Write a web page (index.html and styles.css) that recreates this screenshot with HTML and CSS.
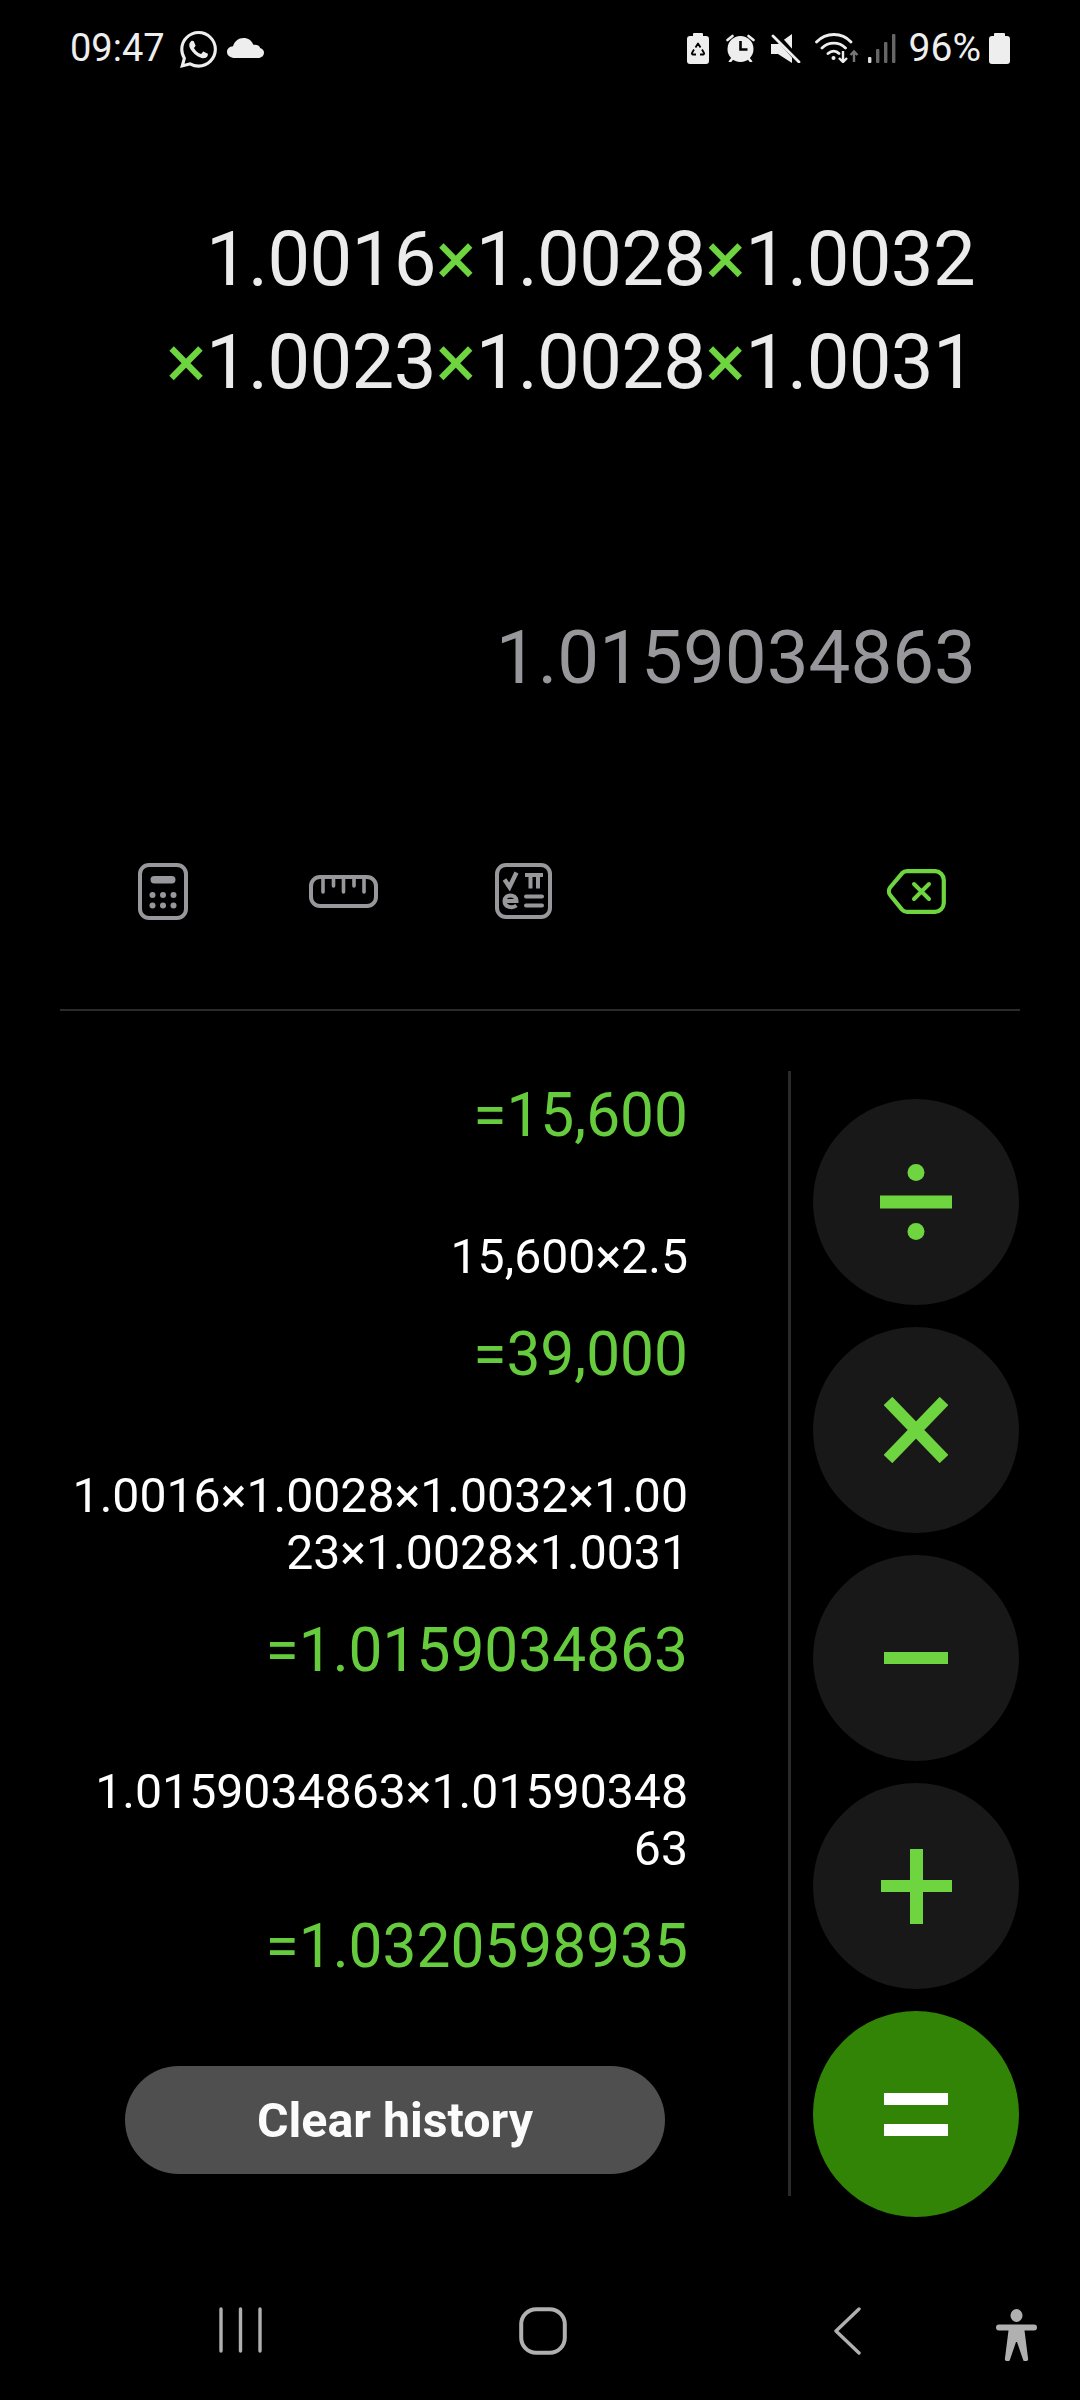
FILE: index.html
```html
<!DOCTYPE html>
<html lang="en">
<head>
    <meta charset="UTF-8">
    <meta name="viewport" content="width=device-width, initial-scale=1.0">
    <title>Calculator</title>
    <link rel="stylesheet" href="styles.css">
</head>
<body>
    <div class="app">
        <div class="statusbar">
            <span class="clock">09:47</span>
            <svg class="st-whatsapp" viewBox="0 0 24 24"><path fill="#eee" d="M17.472 14.382c-.297-.149-1.758-.867-2.03-.967-.273-.099-.471-.148-.67.15-.197.297-.767.966-.94 1.164-.173.199-.347.223-.644.075-.297-.15-1.255-.463-2.39-1.475-.883-.788-1.48-1.761-1.653-2.059-.173-.297-.018-.458.13-.606.134-.133.298-.347.446-.52.149-.174.198-.298.298-.497.099-.198.05-.371-.025-.52-.075-.149-.669-1.612-.916-2.207-.242-.579-.487-.5-.669-.51-.173-.008-.371-.01-.57-.01-.198 0-.52.074-.792.372-.272.297-1.04 1.016-1.04 2.479 0 1.462 1.065 2.875 1.213 3.074.149.198 2.096 3.2 5.077 4.487.709.306 1.262.489 1.694.625.712.227 1.36.195 1.871.118.571-.085 1.758-.719 2.006-1.413.248-.694.248-1.289.173-1.413-.074-.124-.272-.198-.57-.347m-5.421 7.403h-.004a9.87 9.87 0 01-5.031-1.378l-.361-.214-3.741.982.998-3.648-.235-.374a9.86 9.86 0 01-1.51-5.26c.001-5.45 4.436-9.884 9.888-9.884 2.64 0 5.122 1.03 6.988 2.898a9.825 9.825 0 012.893 6.994c-.003 5.45-4.437 9.884-9.885 9.884m8.413-18.297A11.815 11.815 0 0012.05 0C5.495 0 .16 5.335.157 11.892c0 2.096.547 4.142 1.588 5.945L.057 24l6.305-1.654a11.882 11.882 0 005.683 1.448h.005c6.554 0 11.89-5.335 11.893-11.893a11.821 11.821 0 00-3.48-8.413z"/></svg>
            <svg class="st-cloud" viewBox="0 0 37 20"><path fill="#eee" d="M8 20C3.600 20 0 17.500 0 14c0-3.300 2.600-5.600 6-5.800C7.500 3.300 11.500 0 16.500 0c4.700 0 8.400 2.700 9.800 6.800 .5-.1 1-.1 1.500-.1 2.700 0 4.700 1.200 5.400 3.200 2.200.6 3.800 2.300 3.800 4.600 0 3.200-2.600 5.500-5.800 5.500z"/></svg>
            <div class="status-right">
                <svg class="st-recycle" viewBox="0 0 22 31">
                    <path fill="#eee" d="M7 0h8a1 1 0 0 1 1 1v2h3a3 3 0 0 1 3 3v22a3 3 0 0 1-3 3H3a3 3 0 0 1-3-3V6a3 3 0 0 1 3-3h3V1a1 1 0 0 1 1-1z"/>
                    <path fill="none" stroke="#000" stroke-width="1.8" stroke-linejoin="round" d="M8.500 14.500L11 10.500l2.500 4M15 16.500l2 3.500a1 1 0 0 1-1 1.500h-3M9 21.500H6a1 1 0 0 1-1-1.500l2-3.500"/>
                </svg>
                <svg class="st-alarm" viewBox="0 0 29 28">
                    <circle cx="14.500" cy="15" r="13" fill="#eee"/>
                    <path stroke="#000" stroke-width="2" d="M0 7L7 0M29 7L22 0"/>
                    <path fill="none" stroke="#eee" stroke-width="2.600" stroke-linecap="round" d="M1.500 6L6.500 2M27.500 6L22.500 2M6 25l-2 2.500M23 25l2 2.500"/>
                    <path fill="none" stroke="#000" stroke-width="2.600" d="M14.500 7v8.500h7"/>
                </svg>
                <svg class="st-mute" viewBox="0 0 30 29">
                    <path fill="#eee" d="M0 10h7L21 0v29L7 20H0z"/>
                    <path stroke="#000" stroke-width="6" d="M2 -2l27 30"/>
                    <path stroke="#eee" stroke-width="2.800" stroke-linecap="round" d="M2 2l26 26"/>
                </svg>
                <svg class="st-wifi" viewBox="0 0 44 30">
                    <path fill="none" stroke="#eee" stroke-width="2.800" stroke-linecap="round" d="M1.500 9C11 -1 27 -1 36 9M7 15c6.500-6.500 17-6.500 23.500 0M13 20.500c3.500-3 8-3 11 0"/>
                    <circle cx="18.500" cy="25" r="2" fill="#eee"/>
                    <path fill="none" stroke="#eee" stroke-width="2.400" d="M28 18v11M24 25l4 4 4-4"/>
                    <path fill="none" stroke="#777" stroke-width="2.400" d="M39 29V19M35.500 22l3.500-3.500 3.500 3.500"/>
                </svg>
                <svg class="st-signal" viewBox="0 0 28 29">
                    <rect x="0" y="23" width="3.400" height="6" rx="1" fill="#ddd"/>
                    <rect x="8" y="15" width="3.400" height="14" rx="1" fill="#666"/>
                    <rect x="16" y="8" width="3.400" height="21" rx="1" fill="#666"/>
                    <rect x="24" y="0" width="3.400" height="29" rx="1" fill="#666"/>
                </svg>
                <span class="battery-pct">96%</span>
                <svg class="st-battery" viewBox="0 0 21 31"><path fill="#eee" d="M6 0h9a1 1 0 0 1 1 1v2h2a3 3 0 0 1 3 3v22a3 3 0 0 1-3 3H3a3 3 0 0 1-3-3V6a3 3 0 0 1 3-3h2V1a1 1 0 0 1 1-1z"/></svg>
            </div>
        </div>

        <div class="display">
            <div class="expr-line">1.0016<span class="op">×</span>1.0028<span class="op">×</span>1.0032</div>
            <div class="expr-line"><span class="op">×</span>1.0023<span class="op">×</span>1.0028<span class="op">×</span>1.0031</div>
            <div class="preview">1.0159034863</div>
        </div>

        <div class="tools">
            <div class="tool">
                <svg width="50" height="57" viewBox="0 0 50 57">
                    <rect x="2" y="2" width="46" height="53" rx="9" fill="none" stroke="#98989c" stroke-width="4"/>
                    <rect x="12.500" y="13" width="25" height="7.500" rx="3.700" fill="#98989c"/>
                    <g fill="#98989c">
                        <circle cx="14.500" cy="32" r="3"/><circle cx="25" cy="32" r="3"/><circle cx="35.500" cy="32" r="3"/>
                        <circle cx="14.500" cy="42.500" r="3"/><circle cx="25" cy="42.500" r="3"/><circle cx="35.500" cy="42.500" r="3"/>
                    </g>
                </svg>
            </div>
            <div class="tool">
                <svg width="69" height="33" viewBox="0 0 69 33">
                    <rect x="2" y="2" width="65" height="29" rx="9" fill="none" stroke="#98989c" stroke-width="4"/>
                    <path fill="none" stroke="#98989c" stroke-width="3.600" stroke-linecap="round" d="M14 3v14M24.500 3v8M34.500 3v14M45 3v8M55 3v14"/>
                </svg>
            </div>
            <div class="tool">
                <svg width="57" height="56" viewBox="0 0 57 56">
                    <rect x="2" y="2" width="53" height="52" rx="9" fill="none" stroke="#98989c" stroke-width="4"/>
                    <path fill="none" stroke="#98989c" stroke-width="4.400" d="M9.500 16.500l5 7.500 7-14.500"/>
                    <path fill="none" stroke="#98989c" stroke-width="4" d="M30 12h18M35.500 12v13.500M43 12v13.500"/>
                    <path fill="none" stroke="#98989c" stroke-width="4" d="M9.500 38h12c0-7.500-12-7.500-12 0 0 6.500 8 7.500 12 4.500"/>
                    <path fill="none" stroke="#98989c" stroke-width="4" stroke-linecap="round" d="M31 33.500h16M31 42.500h16"/>
                </svg>
            </div>
            <div class="tool tool-back">
                <svg width="59" height="45" viewBox="0 0 59 45">
                    <path fill="none" stroke="#6ed43f" stroke-width="4.200" stroke-linejoin="round" d="M20 2.200h28a9 9 0 0 1 8.800 8.800v23a9 9 0 0 1-8.800 8.800H20a7 7 0 0 1-5-2.200L3.500 26.500a6.500 6.500 0 0 1 0-8.500L15 4.300A7 7 0 0 1 20 2.200z"/>
                    <path fill="none" stroke="#6ed43f" stroke-width="4" stroke-linecap="round" d="M27 15l15 15M42 15L27 30"/>
                </svg>
            </div>
        </div>

        <div class="divider"></div>

        <div class="main">
            <div class="history">
                <div class="h-result">=15,600</div>
                <div class="h-expr">15,600×2.5</div>
                <div class="h-result">=39,000</div>
                <div class="h-expr">1.0016×1.0028×1.0032×1.00<br>23×1.0028×1.0031</div>
                <div class="h-result">=1.0159034863</div>
                <div class="h-expr">1.0159034863×1.01590348<br>63</div>
                <div class="h-result">=1.0320598935</div>
                <button class="clear-btn">Clear history</button>
            </div>
            <div class="vline"></div>
            <div class="keypad">
                <div class="key">
                    <svg width="72" height="76" viewBox="0 0 72 76" fill="#6ed43f">
                        <circle cx="36" cy="8.500" r="8.500"/><rect x="0" y="31.500" width="72" height="13"/><circle cx="36" cy="67.500" r="8.500"/>
                    </svg>
                </div>
                <div class="key">
                    <svg width="64" height="66" viewBox="0 0 64 66">
                        <path fill="none" stroke="#6ed43f" stroke-width="12" d="M4 4l56 58M60 4L4 62"/>
                    </svg>
                </div>
                <div class="key">
                    <svg width="64" height="12" viewBox="0 0 64 12"><rect width="64" height="12" fill="#6ed43f"/></svg>
                </div>
                <div class="key">
                    <svg width="71" height="75" viewBox="0 0 71 75" fill="#6ed43f">
                        <rect x="0" y="31" width="71" height="12"/><rect x="29" y="0" width="13" height="75"/>
                    </svg>
                </div>
                <div class="key key-equals">
                    <svg width="64" height="43" viewBox="0 0 64 43" fill="#fff">
                        <rect width="64" height="12"/><rect y="31" width="64" height="12"/>
                    </svg>
                </div>
            </div>
        </div>

        <div class="navbar">
            <svg class="nav-recents" width="44" height="46" viewBox="0 0 44 46">
                <path stroke="#b0b0b0" stroke-width="3.400" stroke-linecap="round" d="M2 2v42M21.500 2v42M41 2v42"/>
            </svg>
            <svg class="nav-home" width="48" height="48" viewBox="0 0 48 48">
                <rect x="2.200" y="2.200" width="43.600" height="43.600" rx="15" fill="none" stroke="#b0b0b0" stroke-width="4"/>
            </svg>
            <svg class="nav-back" width="28" height="48" viewBox="0 0 28 48">
                <path fill="none" stroke="#b0b0b0" stroke-width="3.400" stroke-linecap="round" stroke-linejoin="round" d="M26 2L3 24l23 22"/>
            </svg>
            <svg class="nav-access" width="41" height="52" viewBox="0 0 41 52" fill="#b0b0b0">
                <ellipse cx="20.500" cy="6.500" rx="6" ry="6.500"/>
                <path d="M3 15.500h35a3 3 0 0 1 0 6H28.500L32 49a2.500 2.500 0 0 1-5 1.500L21 33h-1l-6 17.500A2.500 2.500 0 0 1 9 49l3.500-27.500H3a3 3 0 0 1 0-6z"/>
            </svg>
        </div>
    </div>
</body>
</html>
```

FILE: styles.css
```css
body {
    margin: 0;
    padding: 0;
    background-color: #000;
    font-family: 'Roboto', sans-serif;
    color: #fff;
}
.app {
    width: 1080px;
    height: 2400px;
    display: flex;
    flex-direction: column;
    overflow: hidden;
}

/* status bar */
.statusbar {
    height: 96px;
    padding: 0 70px;
    display: flex;
    align-items: center;
    color: #eee;
    font-size: 38px;
}
.status-right {
    margin-left: auto;
    display: flex;
    align-items: center;
}
.st-whatsapp {
    width: 37px;
    height: 37px;
    margin-left: 15px;
    margin-top: 2px;
}
.st-cloud {
    width: 37px;
    height: 20px;
    margin-left: 10px;
}
.st-recycle {
    width: 22px;
    height: 31px;
}
.st-alarm {
    width: 29px;
    height: 28px;
    margin-left: 17px;
}
.st-mute {
    width: 30px;
    height: 29px;
    margin-left: 16px;
}
.st-wifi {
    width: 44px;
    height: 30px;
    margin-left: 14px;
}
.st-signal {
    width: 28px;
    height: 29px;
    margin-left: 9px;
}
.battery-pct {
    margin-left: 13px;
    font-size: 39px;
}
.st-battery {
    width: 21px;
    height: 31px;
    margin-left: 8px;
}

/* expression display */
.display {
    height: 724px;
    padding: 112px 105px 0 0;
    box-sizing: border-box;
    text-align: right;
}
.expr-line {
    font-size: 76px;
    line-height: 103px;
    letter-spacing: -0.65px;
    color: #ebebeb;
}
.op {
    color: #6ed43f;
}
.preview {
    margin: 199px -1px 0 0;
    font-size: 74.5px;
    line-height: 90px;
    color: #98989c;
}

/* tool row */
.tools {
    height: 142px;
    padding: 0 61px 0 73px;
    display: flex;
    align-items: center;
}
.tool {
    width: 180px;
    display: flex;
    justify-content: center;
    align-items: center;
}
.tool-back {
    width: 206px;
    margin-left: auto;
}
.divider {
    height: 2px;
    margin: 47px 60px 0;
    background-color: #2b2b2b;
}

/* history and keys */
.main {
    display: flex;
    height: 1264px;
}
.history {
    width: 788px;
    padding: 69px 100px 0 40px;
    box-sizing: border-box;
    text-align: right;
}
.h-result {
    margin-top: 34px;
    font-size: 60.4px;
    line-height: 72px;
    color: #66cc3e;
}
.h-result:first-child {
    margin-top: 0;
}
.h-expr {
    margin-top: 76px;
    font-size: 48.2px;
    line-height: 57px;
    color: #fff;
}
.clear-btn {
    display: block;
    width: 540px;
    height: 108px;
    margin: 83px 0 0 85px;
    border: none;
    border-radius: 54px;
    background-color: #4f4f4f;
    color: #fbfbfb;
    font-family: 'Roboto', sans-serif;
    font-size: 48.3px;
    font-weight: 700;
}
.vline {
    width: 3px;
    height: 1125px;
    margin-top: 60px;
    background-color: #2a2a2a;
}
.keypad {
    margin-left: 22px;
    padding-top: 88px;
    display: flex;
    flex-direction: column;
    gap: 22px;
}
.key {
    width: 206px;
    height: 206px;
    border-radius: 50%;
    background-color: #181818;
    display: flex;
    align-items: center;
    justify-content: center;
}
.key-equals {
    background-color: #328406;
}

/* nav bar */
.navbar {
    flex: 1;
    padding: 32px 0 0 219px;
    display: flex;
    align-items: flex-start;
}
.nav-home {
    margin-left: 256px;
}
.nav-back {
    margin-left: 266px;
}
.nav-access {
    margin-left: 135px;
    margin-top: 2px;
}
```
